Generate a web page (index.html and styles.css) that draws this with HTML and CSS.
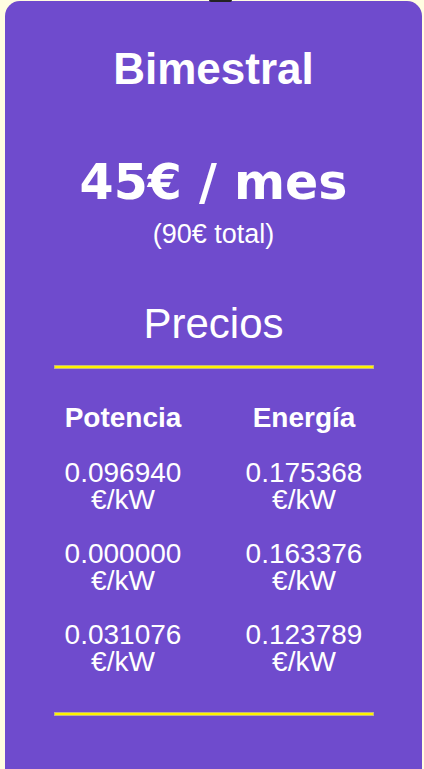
FILE: index.html
```html
<!DOCTYPE html>
<html lang="es">
<head>
    <meta charset="UTF-8">
    <meta name="viewport" content="width=device-width, initial-scale=1.0">
    <title>Bimestral</title>
    <link rel="stylesheet" href="styles.css">
</head>
<body>
    <div class="tab"></div>
    <div class="card">
        <h1 class="plan">Bimestral</h1>
        <div class="price">45€ / mes</div>
        <div class="total">(90€ total)</div>

        <h2 class="prices-title">Precios</h2>
        <hr class="line">

        <div class="prices">
            <div class="head">Potencia</div>
            <div class="head">Energía</div>

            <div class="value">0.096940 €/kW</div>
            <div class="value">0.175368 €/kW</div>

            <div class="value">0.000000 €/kW</div>
            <div class="value">0.163376 €/kW</div>

            <div class="value">0.031076 €/kW</div>
            <div class="value">0.123789 €/kW</div>
        </div>

        <hr class="line bottom">
    </div>
</body>
</html>
```

FILE: styles.css
```css
* {
    box-sizing: border-box;
}

body {
    margin: 0;
    background-color: #fffde1;
    font-family: "Liberation Sans", Arial, sans-serif;
    color: #fff;
}

.tab {
    position: absolute;
    top: 0;
    left: 209px;
    width: 23px;
    height: 2px;
    background: #222;
    border-radius: 0 0 3px 3px;
}

.card {
    margin: 1px 2px 0 5px;
    padding: 0 0 60px;
    background-color: #6f4bcd;
    border-radius: 15px 15px 0 0;
    text-align: center;
}

.plan {
    margin: 0;
    padding-top: 42px;
    font-size: 44px;
    line-height: 52px;
    font-weight: bold;
}

.price {
    margin-top: 60px;
    font-family: "DejaVu Sans", sans-serif;
    font-weight: bold;
    font-size: 49px;
    line-height: 56px;
}

.total {
    margin-top: 8px;
    font-size: 27px;
    line-height: 30px;
}

.prices-title {
    margin: 51px 0 0;
    font-size: 42px;
    line-height: 48px;
    font-weight: normal;
}

.line {
    width: 320px;
    height: 4px;
    margin: 17px auto 0;
    border: 1px solid #c2b38a;
    background-color: #fff200;
}

.prices {
    display: grid;
    grid-template-columns: 181px 181px;
    justify-content: center;
    row-gap: 27px;
    margin-top: 34px;
}

.head {
    font-size: 28px;
    font-weight: bold;
    line-height: 29px;
}

.value {
    font-size: 28px;
    line-height: 27px;
}

.line.bottom {
    margin-top: 37px;
}
```
